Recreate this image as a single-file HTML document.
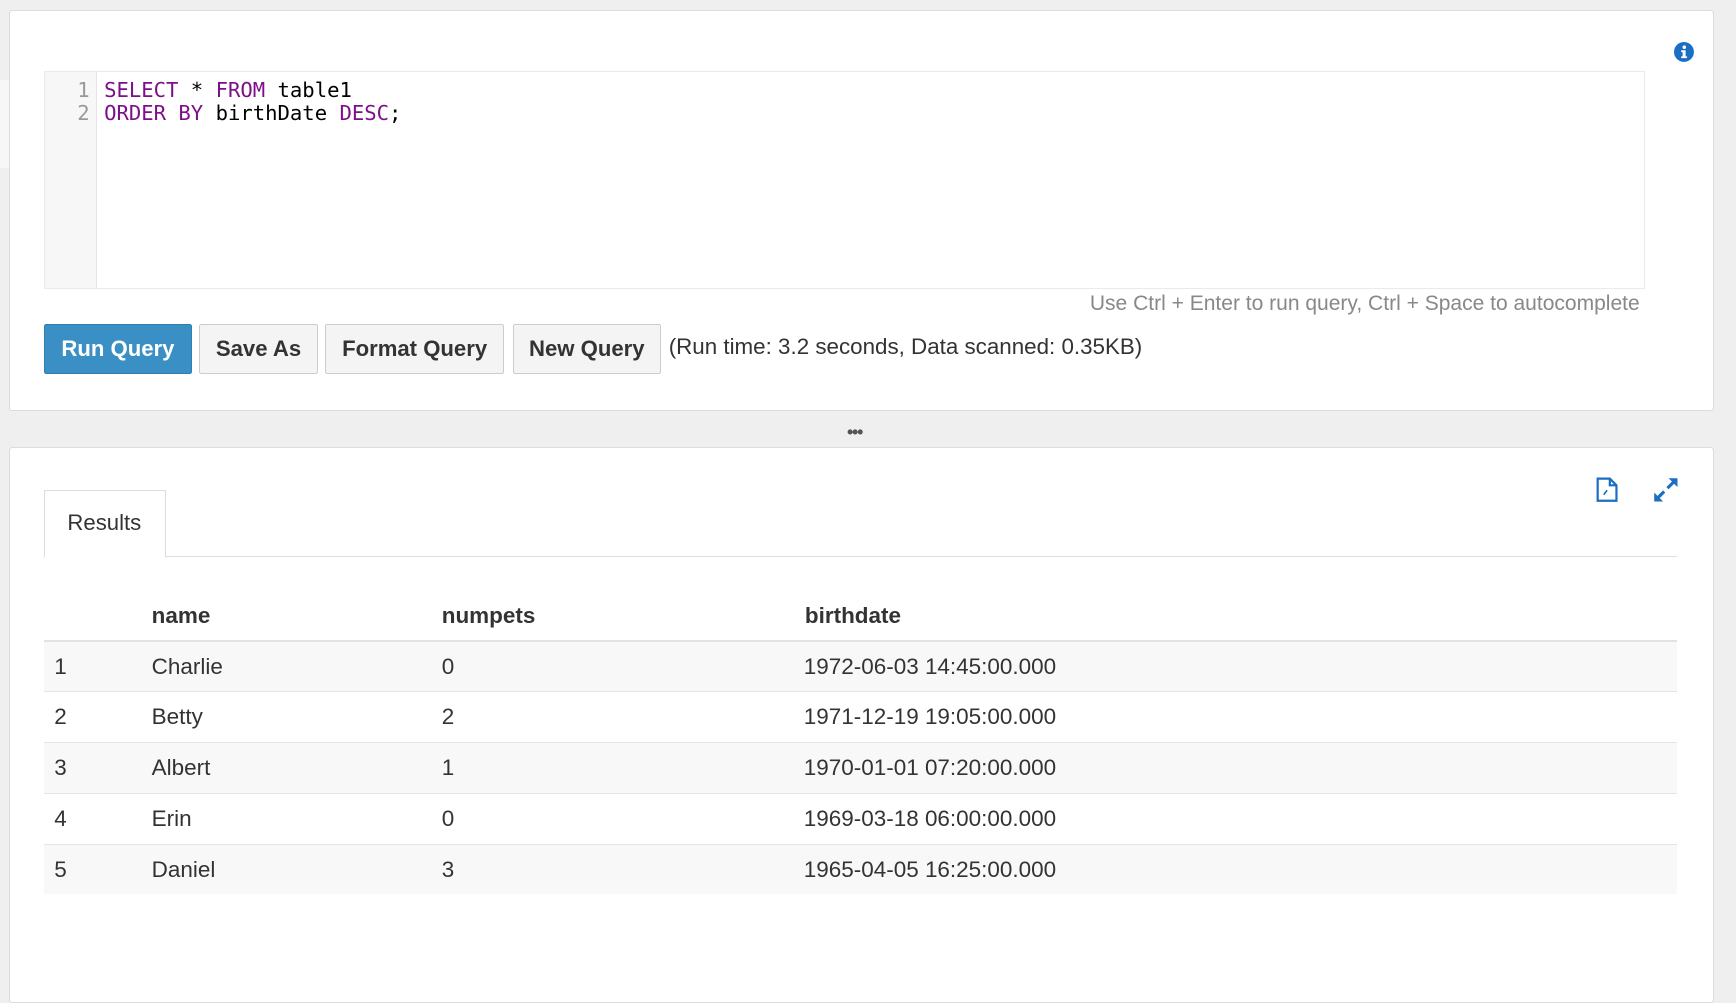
<!DOCTYPE html>
<html><head><meta charset="utf-8"><style>
html{zoom:1.10714}
body{margin:0;width:1568px;height:876px;background:#efefef;font-family:"Liberation Sans",Arial,sans-serif;color:#333;position:relative;overflow:hidden}
.a{position:absolute}
.panel{position:absolute;background:#fff;border:1px solid #dcdcdc;border-radius:3px}
.mono{font-family:"DejaVu Sans Mono","Liberation Mono",monospace;font-size:18.6px;line-height:21px}
.k{color:#7d0f8a}
.btn{position:absolute;top:293px;height:45px;box-sizing:border-box;border:1px solid #ccc;background:#f4f4f4;border-radius:2px;font-weight:bold;font-size:20px;line-height:43px;text-align:center;color:#333}
.row{position:absolute;left:40px;width:1475px;height:45px;border-top:1px solid #e4e4e4;font-size:20.3px;line-height:45px}
.row span,.hd span{position:absolute}
.s{background:#f8f8f8}
</style></head><body>
<div class="a" style="left:0;top:72px;width:8px;height:80px;background:#f7f7f7"></div>
<div class="panel" style="left:8px;top:9px;width:1538px;height:360px"></div>
<svg class="a" style="left:1512px;top:38px" width="18" height="18" viewBox="0 0 18 18"><circle cx="9" cy="9" r="9" fill="#1b6ec2"/><circle cx="9.3" cy="4.7" r="1.6" fill="#fff"/><path d="M6.5 7.5h4v5.5h1.3v1.6H6.5V13h1.3V9.1H6.5z" fill="#fff"/></svg>
<div class="a" style="left:40px;top:64px;width:1444px;height:195px;border:1px solid #eaeaea;background:#fff"></div>
<div class="a" style="left:41px;top:65px;width:46px;height:195px;background:#f7f7f7;border-right:1px solid #e6e6e6"></div>
<div class="a mono" style="left:41px;top:71px;width:40px;text-align:right;color:#999">1<br>2</div>
<div class="a mono" style="left:94px;top:71px;color:#000"><span class="k">SELECT</span> * <span class="k">FROM</span> table1<br><span class="k">ORDER BY</span> birthDate <span class="k">DESC</span>;</div>
<div class="a" style="right:87px;top:264px;font-size:19px;color:#888;line-height:22px">Use Ctrl + Enter to run query, Ctrl + Space to autocomplete</div>
<div class="btn" style="left:40px;width:133px;background:#3a8fc4;border-color:#2f7fb2;color:#fff">Run Query</div>
<div class="btn" style="left:180px;width:107px">Save As</div>
<div class="btn" style="left:294px;width:161px">Format Query</div>
<div class="btn" style="left:463px;width:134px">New Query</div>
<div class="a" style="left:604px;top:303px;font-size:20.2px;line-height:22px">(Run time: 3.2 seconds, Data scanned: 0.35KB)</div>
<div class="a" style="left:765px;top:381px;font-size:16px;font-weight:bold;color:#555;letter-spacing:-1px">•••</div>
<div class="panel" style="left:8px;top:404px;width:1538px;height:500px"></div>
<svg class="a" style="left:1442px;top:431px" width="21" height="23" viewBox="0 0 21 23"><path d="M1.5 1.5h11l6 6v14h-17z M12.5 1.5v6h6" fill="none" stroke="#1b6ec2" stroke-width="2"/><path d="M7 16l3-4" stroke="#1b6ec2" stroke-width="1.5"/></svg>
<svg class="a" style="left:1492px;top:430px" width="25" height="25" viewBox="0 0 25 25"><path d="M15 2h8v8l-3-3-5 5-2-2 5-5z M10 23H2v-8l3 3 5-5 2 2-5 5z" fill="#1b6ec2"/></svg>
<div class="a" style="left:40px;top:502px;width:1475px;height:1px;background:#ddd"></div>
<div class="a" style="left:40px;top:443px;width:108px;height:59px;border:1px solid #ddd;border-bottom:1px solid #fff;background:#fff;font-size:20px;line-height:58px;text-indent:20px;box-sizing:content-box">Results</div>
<div class="hd a" style="left:40px;top:545px;width:1475px;font-size:20.3px;font-weight:bold;line-height:24px"><span style="left:97px">name</span><span style="left:359px">numpets</span><span style="left:687px">birthdate</span></div>
<div class="row s" style="top:578px;border-top:2px solid #e2e2e2;height:45px"><span style="left:9px">1</span><span style="left:97px">Charlie</span><span style="left:359px">0</span><span style="left:686px">1972-06-03 14:45:00.000</span></div>
<div class="row" style="top:624px"><span style="left:9px">2</span><span style="left:97px">Betty</span><span style="left:359px">2</span><span style="left:686px">1971-12-19 19:05:00.000</span></div>
<div class="row s" style="top:670px"><span style="left:9px">3</span><span style="left:97px">Albert</span><span style="left:359px">1</span><span style="left:686px">1970-01-01 07:20:00.000</span></div>
<div class="row" style="top:716px"><span style="left:9px">4</span><span style="left:97px">Erin</span><span style="left:359px">0</span><span style="left:686px">1969-03-18 06:00:00.000</span></div>
<div class="row s" style="top:762px"><span style="left:9px">5</span><span style="left:97px">Daniel</span><span style="left:359px">3</span><span style="left:686px">1965-04-05 16:25:00.000</span></div>
</body></html>
